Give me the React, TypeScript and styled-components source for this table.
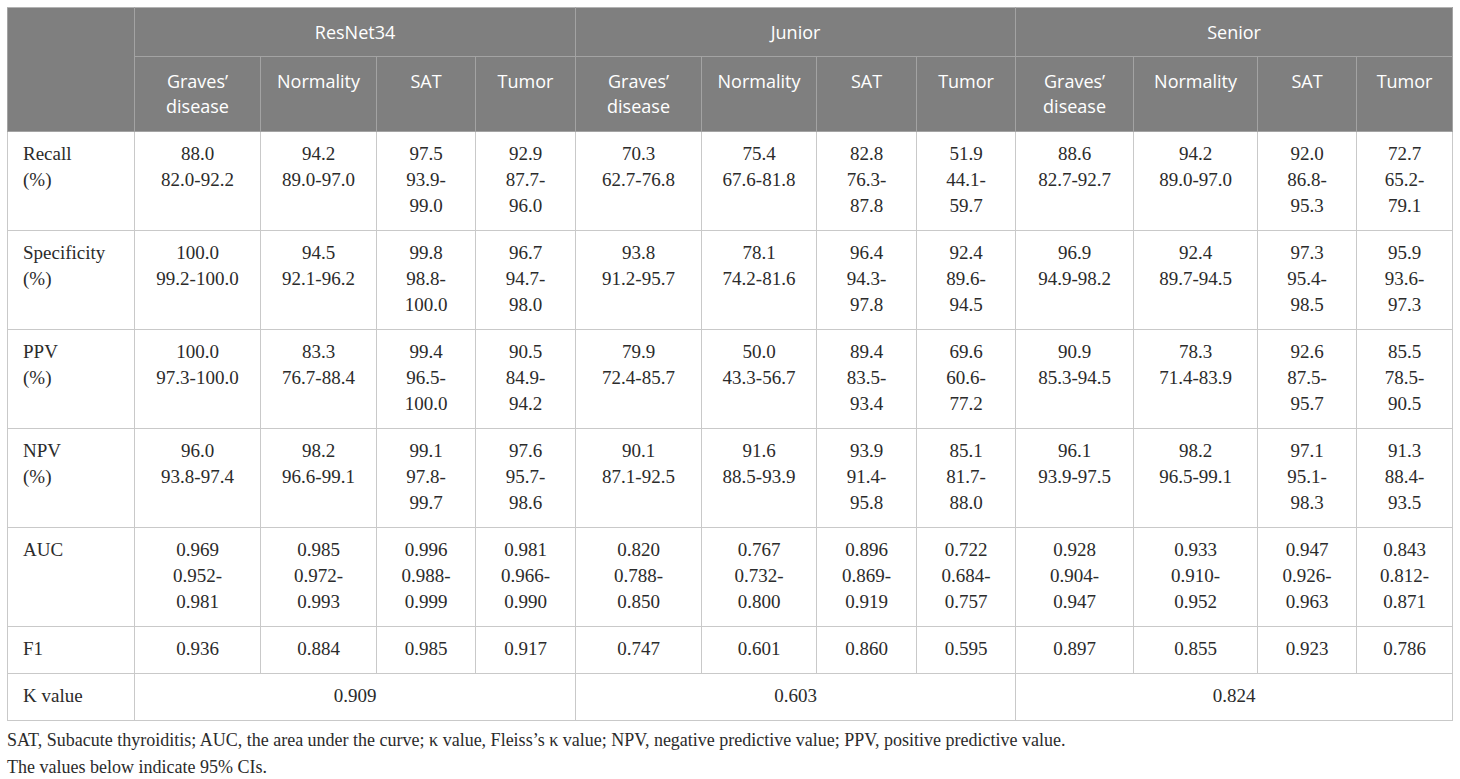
import React from "react";
import styled, { createGlobalStyle } from "styled-components";

const Global = createGlobalStyle`
  html, body { margin: 0; padding: 0; background: #ffffff; }
  body { font-family: "Liberation Serif", "Times New Roman", serif; color: #2b2b2b; }
`;

const Page = styled.div`
  padding: 7px 0 0 7px;
  width: 1446px;
`;

const Table = styled.table`
  border-collapse: collapse;
  table-layout: fixed;
  width: 1446px;
  border: 1px solid #c9c9c9;
`;

const HeadCell = styled.th<{ $sub?: boolean }>`
  background: #7f7f7f;
  color: #ffffff;
  font-family: "Open Sans", "Noto Sans", sans-serif;
  font-weight: 400;
  font-size: 18px;
  line-height: 25px;
  text-align: center;
  vertical-align: top;
  padding: 12px 6px ${(p) => (p.$sub ? "12px" : "11px")};
  border: 1px solid #a3a3a3;
  border-top-color: #b3b3b3;
`;

const LabelCell = styled.td`
  font-size: 19px;
  line-height: 26px;
  text-align: left;
  vertical-align: top;
  padding: 9px 10px 11px 15px;
  border: 1px solid #c9c9c9;
  color: #2b2b2b;
`;

const DataCell = styled.td<{ $middle?: boolean }>`
  font-size: 19px;
  line-height: 26px;
  text-align: center;
  vertical-align: ${(p) => (p.$middle ? "middle" : "top")};
  padding: 9px 4px 11px;
  border: 1px solid #c9c9c9;
  color: #2b2b2b;
  white-space: nowrap;
`;

const Line = styled.span`
  display: block;
`;

const Footnote = styled.p`
  margin: 6px 0 0;
  font-size: 18px;
  line-height: 27px;
  color: #2b2b2b;
`;

const widths = [127, 126, 116, 99, 100, 126, 115, 100, 99, 118, 124, 99, 96];

const groups = ["ResNet34", "Junior", "Senior"];
const subs = [["Graves’", "disease"], ["Normality"], ["SAT"], ["Tumor"]];

type Row = { label: string[]; cells: string[][] };

const split = (s: string) => s.split("|");

const rows: Row[] = [
  {
    label: ["Recall", "(%)"],
    cells: [
      "88.0|82.0-92.2", "94.2|89.0-97.0", "97.5|93.9-|99.0", "92.9|87.7-|96.0",
      "70.3|62.7-76.8", "75.4|67.6-81.8", "82.8|76.3-|87.8", "51.9|44.1-|59.7",
      "88.6|82.7-92.7", "94.2|89.0-97.0", "92.0|86.8-|95.3", "72.7|65.2-|79.1",
    ].map(split),
  },
  {
    label: ["Specificity", "(%)"],
    cells: [
      "100.0|99.2-100.0", "94.5|92.1-96.2", "99.8|98.8-|100.0", "96.7|94.7-|98.0",
      "93.8|91.2-95.7", "78.1|74.2-81.6", "96.4|94.3-|97.8", "92.4|89.6-|94.5",
      "96.9|94.9-98.2", "92.4|89.7-94.5", "97.3|95.4-|98.5", "95.9|93.6-|97.3",
    ].map(split),
  },
  {
    label: ["PPV", "(%)"],
    cells: [
      "100.0|97.3-100.0", "83.3|76.7-88.4", "99.4|96.5-|100.0", "90.5|84.9-|94.2",
      "79.9|72.4-85.7", "50.0|43.3-56.7", "89.4|83.5-|93.4", "69.6|60.6-|77.2",
      "90.9|85.3-94.5", "78.3|71.4-83.9", "92.6|87.5-|95.7", "85.5|78.5-|90.5",
    ].map(split),
  },
  {
    label: ["NPV", "(%)"],
    cells: [
      "96.0|93.8-97.4", "98.2|96.6-99.1", "99.1|97.8-|99.7", "97.6|95.7-|98.6",
      "90.1|87.1-92.5", "91.6|88.5-93.9", "93.9|91.4-|95.8", "85.1|81.7-|88.0",
      "96.1|93.9-97.5", "98.2|96.5-99.1", "97.1|95.1-|98.3", "91.3|88.4-|93.5",
    ].map(split),
  },
  {
    label: ["AUC"],
    cells: [
      "0.969|0.952-|0.981", "0.985|0.972-|0.993", "0.996|0.988-|0.999", "0.981|0.966-|0.990",
      "0.820|0.788-|0.850", "0.767|0.732-|0.800", "0.896|0.869-|0.919", "0.722|0.684-|0.757",
      "0.928|0.904-|0.947", "0.933|0.910-|0.952", "0.947|0.926-|0.963", "0.843|0.812-|0.871",
    ].map(split),
  },
  {
    label: ["F1"],
    cells: [
      "0.936", "0.884", "0.985", "0.917",
      "0.747", "0.601", "0.860", "0.595",
      "0.897", "0.855", "0.923", "0.786",
    ].map(split),
  },
];

const kappa = ["0.909", "0.603", "0.824"];

export default function App() {
  return (
    <>
      <Global />
      <Page>
        <Table>
          <colgroup>
            {widths.map((w, i) => (
              <col key={i} style={{ width: w }} />
            ))}
          </colgroup>
          <thead>
            <tr>
              <HeadCell rowSpan={2} />
              {groups.map((g) => (
                <HeadCell key={g} colSpan={4}>
                  {g}
                </HeadCell>
              ))}
            </tr>
            <tr>
              {groups.map((g) =>
                subs.map((s, i) => (
                  <HeadCell key={g + i} $sub>
                    {s.map((l, j) => (
                      <Line key={j}>{l}</Line>
                    ))}
                  </HeadCell>
                ))
              )}
            </tr>
          </thead>
          <tbody>
            {rows.map((r) => (
              <tr key={r.label[0]}>
                <LabelCell>
                  {r.label.map((l, j) => (
                    <Line key={j}>{l}</Line>
                  ))}
                </LabelCell>
                {r.cells.map((c, i) => (
                  <DataCell key={i} $middle={c.length === 1}>
                    {c.map((l, j) => (
                      <Line key={j}>{l}</Line>
                    ))}
                  </DataCell>
                ))}
              </tr>
            ))}
            <tr>
              <LabelCell>K value</LabelCell>
              {kappa.map((k, i) => (
                <DataCell key={i} colSpan={4} $middle>
                  {k}
                </DataCell>
              ))}
            </tr>
          </tbody>
        </Table>
        <Footnote>
          SAT, Subacute thyroiditis; AUC, the area under the curve; κ value, Fleiss’s κ value; NPV, negative
          predictive value; PPV, positive predictive value.
          <br />
          The values below indicate 95% CIs.
        </Footnote>
      </Page>
    </>
  );
}
